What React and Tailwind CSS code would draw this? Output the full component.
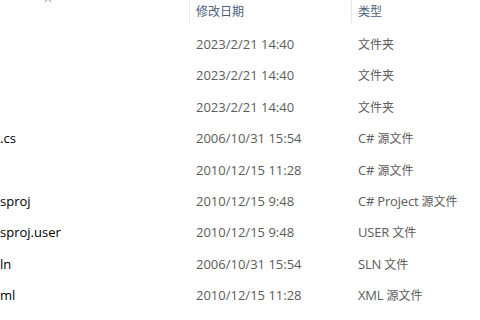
import React from 'react';

const rows = [
  { name: '', date: '2023/2/21 14:40', type: '文件夹' },
  { name: '', date: '2023/2/21 14:40', type: '文件夹' },
  { name: '', date: '2023/2/21 14:40', type: '文件夹' },
  { name: '.cs', date: '2006/10/31 15:54', type: 'C# 源文件' },
  { name: '', date: '2010/12/15 11:28', type: 'C# 源文件' },
  { name: 'sproj', date: '2010/12/15 9:48', type: 'C# Project 源文件' },
  { name: 'sproj.user', date: '2010/12/15 9:48', type: 'USER 文件' },
  { name: 'ln', date: '2006/10/31 15:54', type: 'SLN 文件' },
  { name: 'ml', date: '2010/12/15 11:28', type: 'XML 源文件' },
];

// CJK glyphs render a bit smaller than the latin ones in the original
function Mixed({ text }) {
  const parts = text.split(/([\u4e00-\u9fff]+)/).filter(Boolean);
  return (
    <>
      {parts.map((p, i) =>
        /[\u4e00-\u9fff]/.test(p)
          ? <span key={i} className="text-[12px]">{p}</span>
          : <span key={i} className="tracking-[-0.2px]">{p}</span>
      )}
    </>
  );
}

export default function App() {
  return (
    <div
      className="w-[480px] h-[320px] overflow-hidden bg-white text-[13px]"
      style={{ fontFamily: '"Open Sans", "Noto Sans CJK SC", sans-serif' }}
    >
      {/* header */}
      <div className="grid grid-cols-[189px_162px_1fr] h-[29px]">
        <div className="relative">
          <svg className="absolute left-[44px] -top-[3px]" width="8" height="6" viewBox="0 0 8 6" fill="none">
            <path d="M1 5 L4 2 L7 5" stroke="#9a9a9a" strokeWidth="1" />
          </svg>
        </div>
        <div className="border-l border-[#e5e5e5] h-[23px] pl-[6px] flex items-center text-[12px] text-[#4c607a]">修改日期</div>
        <div className="border-l border-[#e5e5e5] h-[23px] pl-[6px] flex items-center text-[12px] text-[#4c607a]">类型</div>
      </div>

      {/* rows */}
      <div className="flex flex-col">
        {rows.map((r, i) => (
          <div key={i} className="grid grid-cols-[189px_162px_1fr] h-[31.4px] items-center">
            <div className="text-black whitespace-nowrap overflow-hidden">{r.name}</div>
            <div className="pl-[7px] text-[#5c5c5c] whitespace-nowrap">{r.date}</div>
            <div className="pl-[7px] text-[#5c5c5c] whitespace-nowrap"><Mixed text={r.type} /></div>
          </div>
        ))}
      </div>
    </div>
  );
}
